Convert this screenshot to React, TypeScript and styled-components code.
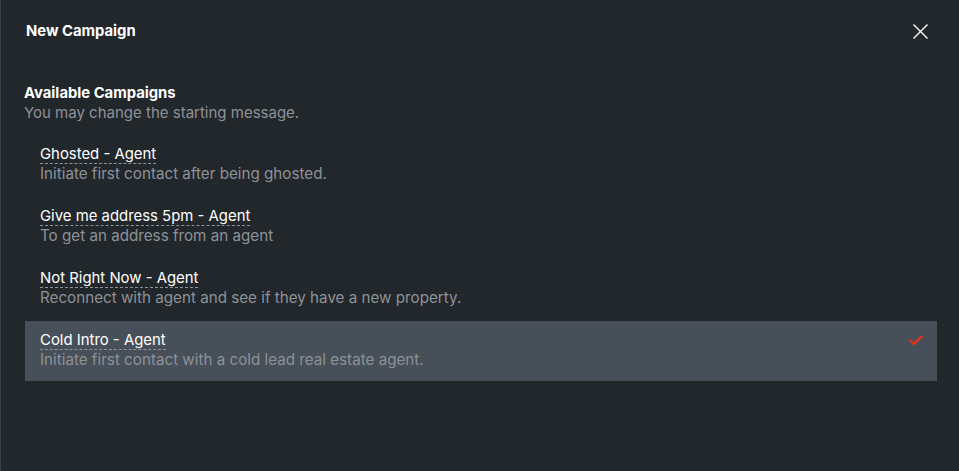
import React from 'react'
import styled, { createGlobalStyle } from 'styled-components'

const GlobalStyle = createGlobalStyle`
  html, body {
    margin: 0;
    padding: 0;
    background: #22272c;
  }
  body {
    font-family: Inter, "Noto Sans", sans-serif;
    -webkit-font-smoothing: antialiased;
  }
`

const campaigns = [
  { title: 'Ghosted - Agent', description: 'Initiate first contact after being ghosted.' },
  { title: 'Give me address 5pm - Agent', description: 'To get an address from an agent' },
  { title: 'Not Right Now - Agent', description: 'Reconnect with agent and see if they have a new property.' },
  { title: 'Cold Intro - Agent', description: 'Initiate first contact with a cold lead real estate agent.' }
]

const StyledModal = styled('div')`
  box-sizing: border-box;
  width: 959px;
  height: 471px;
  background: #22272c;
  border-left: 1px solid #3b4148;
  color: #ffffff;
  display: flex;
  flex-direction: column;
`

const StyledHeader = styled('div')`
  display: flex;
  align-items: center;
  justify-content: space-between;
  padding: 21px 30px 0 25px;
  height: 20px;
`

const StyledTitle = styled('h1')`
  margin: 0;
  font-size: 14.8px;
  font-weight: 700;
  line-height: 20px;
`

const StyledCloseButton = styled('button')`
  background: none;
  border: 0;
  padding: 0;
  width: 17px;
  height: 17px;
  display: flex;
  align-items: center;
  justify-content: center;
  cursor: pointer;
`

const StyledSection = styled('div')`
  display: flex;
  flex-direction: column;
  padding: 42px 22px 0 23px;
`

const StyledSectionTitle = styled('h2')`
  margin: 0;
  font-size: 14.8px;
  font-weight: 700;
  line-height: 20px;
`

const StyledSectionSubtitle = styled('p')`
  margin: 0;
  font-size: 15px;
  line-height: 20px;
  color: #8d9297;
`

const StyledList = styled('div')`
  display: flex;
  flex-direction: column;
  gap: 2px;
  margin-top: 12px;
  padding-left: 1px;
`

type StyledRowProps = {
  $active: boolean
}

const StyledRow = styled('div')<StyledRowProps>`
  display: flex;
  align-items: flex-start;
  justify-content: space-between;
  height: 60px;
  box-sizing: border-box;
  padding: 10px 14px 0 15px;
  background: ${(props) => (props.$active ? '#474f58' : 'transparent')};
  cursor: pointer;
`

const StyledRowText = styled('div')`
  display: flex;
  flex-direction: column;
  align-items: flex-start;
`

const StyledRowTitle = styled('span')`
  font-size: 14.9px;
  line-height: 18px;
  color: #ffffff;
  border-bottom: 1px dashed #8d9297;
`

const StyledRowDescription = styled('span')`
  font-size: 15.2px;
  line-height: 20px;
  color: #8d9297;
`

const StyledCheck = styled('span')`
  display: flex;
  margin-top: 4px;
`

function CloseIcon() {
  return (
    <svg width="17" height="17" viewBox="0 0 17 17">
      <path d="M1.5 1.5 L15.5 15.5 M15.5 1.5 L1.5 15.5" stroke="#ffffff" strokeWidth="1.4" />
    </svg>
  )
}

function CheckIcon() {
  return (
    <svg width="14" height="11" viewBox="0 0 14 11">
      <path d="M1.5 5.5 L5 9 L12.5 1.5" fill="none" stroke="#ee3016" strokeWidth="2.4" strokeLinecap="round" strokeLinejoin="round" />
    </svg>
  )
}

type CampaignRowProps = {
  title: string,
  description: string,
  active: boolean
}

function CampaignRow({ title, description, active }: CampaignRowProps) {
  return (
    <StyledRow $active={active}>
      <StyledRowText>
        <StyledRowTitle>{title}</StyledRowTitle>
        <StyledRowDescription>{description}</StyledRowDescription>
      </StyledRowText>
      {active && (
        <StyledCheck>
          <CheckIcon />
        </StyledCheck>
      )}
    </StyledRow>
  )
}

function App() {
  const selected = 3

  return (
    <>
      <GlobalStyle />
      <StyledModal>
        <StyledHeader>
          <StyledTitle>New Campaign</StyledTitle>
          <StyledCloseButton aria-label="Close">
            <CloseIcon />
          </StyledCloseButton>
        </StyledHeader>
        <StyledSection>
          <StyledSectionTitle>Available Campaigns</StyledSectionTitle>
          <StyledSectionSubtitle>You may change the starting message.</StyledSectionSubtitle>
          <StyledList>
            {campaigns.map((campaign, index) => (
              <CampaignRow key={campaign.title} {...campaign} active={index === selected} />
            ))}
          </StyledList>
        </StyledSection>
      </StyledModal>
    </>
  )
}

export default App
